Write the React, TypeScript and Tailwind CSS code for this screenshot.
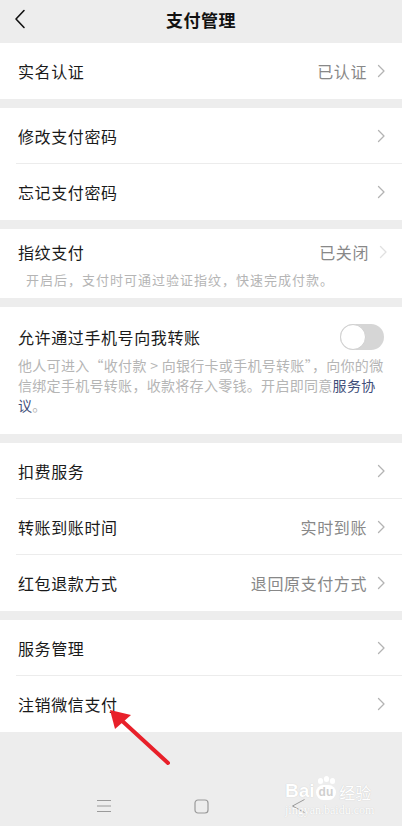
import React from "react";

const Chevron = ({ light = false }: { light?: boolean }) => (
  <svg width="9" height="14" viewBox="0 0 9 14" className="ml-[10px] shrink-0">
    <path d="M1.5 1.5 L7 7 L1.5 12.5" fill="none" stroke={light ? "#e0e0e0" : "#b3b3b3"} strokeWidth="1.3" strokeLinecap="round" strokeLinejoin="round" />
  </svg>
);

const Row = ({ label, value, divider = false }: { label: string; value?: string; divider?: boolean }) => (
  <div className="relative h-[56px] flex items-center pl-[18px] pr-[16px]">
    <div className="flex-1 text-[16px] tracking-[0.6px] text-[#1a1a1a]">{label}</div>
    {value && <div className="text-[16px] tracking-[0.6px] text-[#888888]">{value}</div>}
    <Chevron />
    {divider && <div className="absolute left-[16px] right-0 bottom-0 h-px bg-[#ececec]" />}
  </div>
);

export default function App() {
  return (
    <div
      className="relative w-[402px] h-[826px] bg-[#ededed] overflow-hidden"
      style={{ fontFamily: '"Noto Sans CJK SC", "Noto Sans", sans-serif' }}
    >
      {/* Header */}
      <div className="relative h-[43px] flex items-center justify-center pb-[4px]">
        <svg width="12" height="20" viewBox="0 0 12 20" className="absolute left-[14px] top-[9px]">
          <path d="M10 1.5 L2 10 L10 18.5" fill="none" stroke="#111" strokeWidth="1.6" strokeLinecap="round" strokeLinejoin="round" />
        </svg>
        <div className="text-[17px] font-semibold tracking-[0.5px] text-[#111]">支付管理</div>
      </div>

      {/* Section 1 */}
      <div className="bg-white">
        <Row label="实名认证" value="已认证" />
      </div>

      {/* Section 2 */}
      <div className="bg-white mt-[9px]">
        <Row label="修改支付密码" divider />
        <Row label="忘记支付密码" />
      </div>

      {/* Section 3 */}
      <div className="bg-white mt-[9px] pt-[11px] pb-[8px] h-[69px]">
        <div className="flex items-center h-[24px] pl-[18px] pr-[14px]">
          <div className="flex-1 text-[16px] tracking-[0.6px] text-[#1a1a1a]">指纹支付</div>
          <div className="text-[16px] tracking-[0.6px] text-[#888888]">已关闭</div>
          <Chevron light />
        </div>
        <div className="mt-[6px] pl-[26px] h-[20px] leading-[20px] text-[13px] tracking-[1px] text-[#b5b5b5]">
          开启后，支付时可通过验证指纹，快速完成付款。
        </div>
      </div>

      {/* Section 4 */}
      <div className="bg-white mt-[9px] h-[127px] pt-[16px]">
        <div className="flex items-center h-[28px] pl-[18px] pr-[18px]">
          <div className="flex-1 text-[16px] tracking-[0.6px] text-[#1a1a1a]">允许通过手机号向我转账</div>
          <div className="relative w-[44px] h-[26px] rounded-full bg-[#d6d6d6]">
            <div className="absolute left-0 top-0 w-[26px] h-[26px] rounded-full bg-white border border-[#d0d0d0]" />
          </div>
        </div>
        <div className="mt-[4px] pl-[18px] pr-[12px] text-[14px] leading-[20px] tracking-[0.3px] text-[#b5b5b5] whitespace-nowrap">
          他人可进入“收付款 &gt; 向银行卡或手机号转账”，向你的微
          <br />
          信绑定手机号转账，收款将存入零钱。开启即同意<span className="text-[#3f4f7a]">服务协</span>
          <br />
          <span className="text-[#3f4f7a]">议</span>。
        </div>
      </div>

      {/* Section 5 */}
      <div className="bg-white mt-[9px]">
        <Row label="扣费服务" divider />
        <Row label="转账到账时间" value="实时到账" divider />
        <Row label="红包退款方式" value="退回原支付方式" />
      </div>

      {/* Section 6 */}
      <div className="bg-white mt-[9px]">
        <Row label="服务管理" divider />
        <Row label="注销微信支付" />
      </div>

      {/* Bottom nav */}
      <div className="absolute left-0 right-0 bottom-0 h-[40px] flex items-center justify-center gap-[82px]">
        <svg width="16" height="14" viewBox="0 0 16 14">
          <path d="M1 1.5 H15 M1 7 H15 M1 12.5 H15" stroke="#9a9a9a" strokeWidth="1" />
        </svg>
        <svg width="15" height="15" viewBox="0 0 15 15">
          <rect x="1" y="1" width="13" height="13" rx="3" fill="none" stroke="#9a9a9a" strokeWidth="1.2" />
        </svg>
        <svg width="15" height="16" viewBox="0 0 15 16">
          <path d="M13.5 1.5 L1.5 8 L13.5 14.5" fill="none" stroke="#9a9a9a" strokeWidth="1" strokeLinejoin="round" />
        </svg>
      </div>

      {/* Watermark */}
      <div className="absolute left-[285px] top-[781px] flex flex-col items-start pointer-events-none">
        <div className="flex items-end text-white [text-shadow:0_0_1px_#c0c0c0]" style={{ fontFamily: '"Liberation Sans", sans-serif' }}>
          <span className="text-[19px] font-bold leading-none">Bai</span>
          <span className="relative ml-[1px] rounded-full bg-white px-[3px] text-[12px] font-bold leading-[15px] text-[#d0d0d0] [text-shadow:none]">
            du
            <span className="absolute left-[2px] -top-[7px] w-[5px] h-[6px] rounded-full bg-white" />
            <span className="absolute left-[8px] -top-[9px] w-[5px] h-[6px] rounded-full bg-white" />
            <span className="absolute left-[14px] -top-[7px] w-[5px] h-[6px] rounded-full bg-white" />
          </span>
          <span className="ml-[3px] text-[16px] leading-none" style={{ fontFamily: '"Noto Sans CJK SC", sans-serif' }}>经验</span>
        </div>
        <div className="mt-[4px] text-[12px] leading-none text-white [text-shadow:0_0_1px_#c0c0c0]" style={{ fontFamily: '"Liberation Serif", serif' }}>
          jingyan.baidu.com
        </div>
      </div>

      {/* Red arrow */}
      <svg className="absolute left-0 top-0 pointer-events-none" width="402" height="826" viewBox="0 0 402 826">
        <line x1="168" y1="763" x2="119" y2="718" stroke="#e8202a" strokeWidth="4" strokeLinecap="round" />
        <polygon points="110,710 131,715 115,729" fill="#e8202a" />
      </svg>
    </div>
  );
}
